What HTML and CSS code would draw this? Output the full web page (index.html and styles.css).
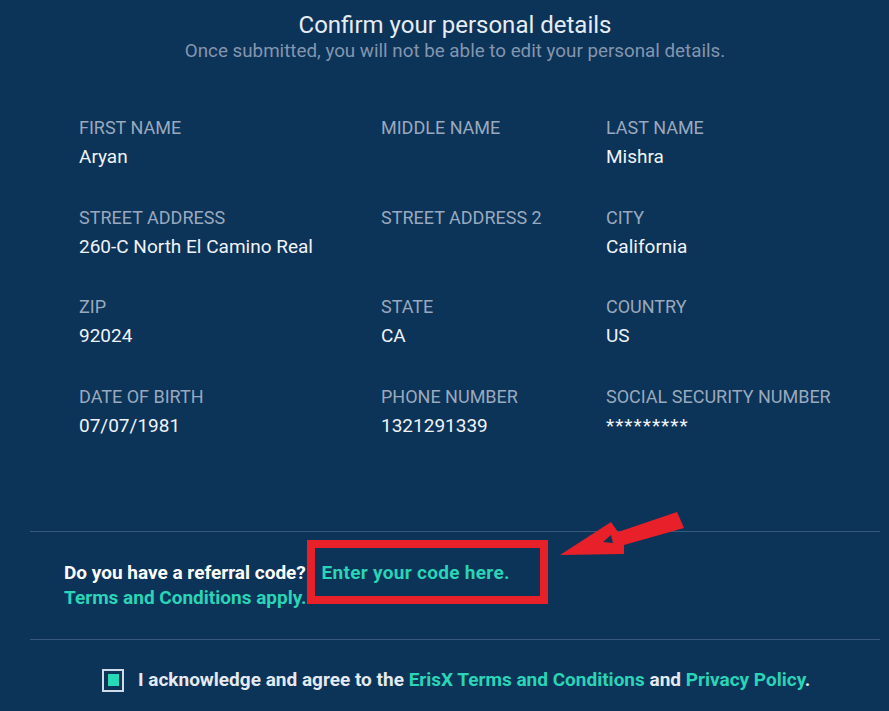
FILE: index.html
```html
<!DOCTYPE html>
<html>
<head>
<meta charset="utf-8">
<link rel="stylesheet" href="styles.css">
</head>
<body>
<div class="page">
  <header class="head">
    <h1 class="title">Confirm your personal details</h1>
    <p class="subtitle">Once submitted, you will not be able to edit your personal details.</p>
  </header>

  <div class="grid">
    <div class="field"><div class="label">FIRST NAME</div><div class="value">Aryan</div></div>
    <div class="field"><div class="label">MIDDLE NAME</div><div class="value"></div></div>
    <div class="field"><div class="label">LAST NAME</div><div class="value">Mishra</div></div>

    <div class="field"><div class="label">STREET ADDRESS</div><div class="value">260-C North El Camino Real</div></div>
    <div class="field"><div class="label">STREET ADDRESS 2</div><div class="value"></div></div>
    <div class="field"><div class="label">CITY</div><div class="value">California</div></div>

    <div class="field"><div class="label">ZIP</div><div class="value">92024</div></div>
    <div class="field"><div class="label">STATE</div><div class="value">CA</div></div>
    <div class="field"><div class="label">COUNTRY</div><div class="value">US</div></div>

    <div class="field"><div class="label">DATE OF BIRTH</div><div class="value">07/07/1981</div></div>
    <div class="field"><div class="label">PHONE NUMBER</div><div class="value">1321291339</div></div>
    <div class="field"><div class="label">SOCIAL SECURITY NUMBER</div><div class="value stars">*********</div></div>
  </div>

  <section class="referral">
    <p class="ref-line"><span class="strong">Do you have a referral code?</span> <a class="link code-link">Enter your code here.</a></p>
    <p class="ref-line"><a class="link">Terms and Conditions apply.</a></p>
    <div class="red-box"></div>
    <svg class="arrow" width="140" height="60" viewBox="0 0 140 60">
      <polygon points="0,44 51,11 58,21 117,1 124,17 64,34 64,43" fill="#e8202a"/>
      <polygon points="43,31 51,24 53,32" fill="#0c3358"/>
    </svg>
  </section>

  <section class="agree">
    <span class="check"><span class="check-fill"></span></span>
    <p class="agree-text">I acknowledge and agree to the <a class="link">ErisX Terms and Conditions</a> and <a class="link">Privacy Policy</a>.</p>
  </section>
</div>
</body>
</html>
```

FILE: styles.css
```css
html, body {
  margin: 0;
  padding: 0;
  background: #0c3358;
}
body {
  font-family: Roboto, "Liberation Sans", sans-serif;
  width: 889px;
  height: 711px;
  overflow: hidden;
}
.page {
  padding: 0 9px 0 30px;
}
.head {
  text-align: center;
  padding-top: 10px;
}
.title {
  margin: 0;
  font-weight: 400;
  font-size: 24px;
  line-height: 30px;
  color: #e6ecf3;
}
.subtitle {
  margin: 0;
  font-size: 18.8px;
  line-height: 22px;
  color: #8496ae;
}
.grid {
  display: grid;
  grid-template-columns: 302px 225px 1fr;
  row-gap: 37.5px;
  padding: 55px 0 0 49px;
  height: 470px;
  box-sizing: border-box;
  align-content: start;
  border-bottom: 1px solid #36597c;
}
.label {
  font-size: 18px;
  line-height: 22px;
  color: #9aa9bd;
}
.value {
  font-size: 19px;
  line-height: 24px;
  margin-top: 6px;
  min-height: 24px;
  color: #f0f3f7;
}
.stars {
  letter-spacing: 1px;
}
.referral {
  position: relative;
  padding: 28px 0 29px 34px;
  border-bottom: 1px solid #36597c;
}
.ref-line {
  margin: 0;
  font-size: 19px;
  line-height: 25px;
  font-weight: 700;
}
.strong {
  color: #ffffff;
}
.link {
  color: #2ad4b6;
  font-weight: 700;
}
.code-link {
  margin-left: 11px;
  letter-spacing: 0.3px;
}
.red-box {
  position: absolute;
  left: 277px;
  top: 8px;
  width: 241px;
  height: 64px;
  box-sizing: border-box;
  border: 8px solid #e8202a;
}
.arrow {
  position: absolute;
  left: 530px;
  top: -21px;
}
.agree {
  display: flex;
  align-items: center;
  gap: 14px;
  padding: 28px 0 0 72px;
}
.check {
  width: 18px;
  height: 19px;
  border: 2px solid #cfdbe8;
  display: flex;
  align-items: center;
  justify-content: center;
  flex: none;
}
.check-fill {
  width: 11px;
  height: 12px;
  background: #27d9b5;
}
.agree-text {
  margin: 0;
  font-size: 19px;
  line-height: 24px;
  font-weight: 700;
  color: #e4eaf1;
}
```
